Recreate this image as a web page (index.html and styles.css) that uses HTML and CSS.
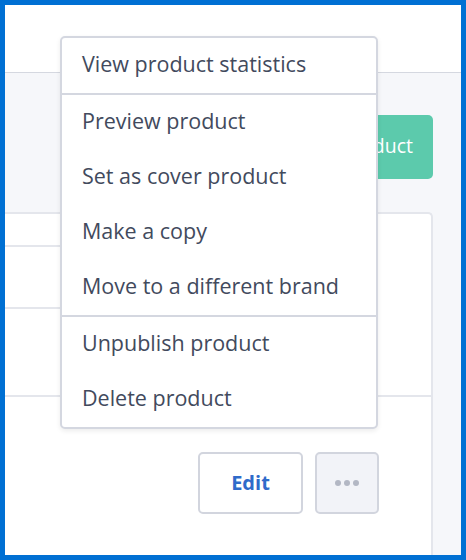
FILE: index.html
```html
<!DOCTYPE html>
<html lang="en">
<head>
    <meta charset="UTF-8">
    <meta name="viewport" content="width=device-width, initial-scale=1.0">
    <title>Products</title>
    <link rel="stylesheet" href="styles.css">
</head>
<body>
    <div class="frame">
        <div class="top-bar"></div>
        <div class="main">
            <div class="toolbar">
                <button type="button" class="add-btn">Add product</button>
            </div>
            <div class="card">
                <div class="row row-head"></div>
                <div class="row row-short"></div>
                <div class="row row-full"></div>
                <div class="actions">
                    <button type="button" class="edit-btn">Edit</button>
                    <button type="button" class="more-btn" aria-label="More">
                        <span class="dot"></span><span class="dot"></span><span class="dot"></span>
                    </button>
                </div>
            </div>
        </div>

        <!-- Product actions dropdown, opened from the ... button -->
        <ul class="menu">
            <li class="menu-group">
                <a href="#">View product statistics</a>
            </li>
            <li class="menu-group">
                <a href="#">Preview product</a>
                <a href="#">Set as cover product</a>
                <a href="#">Make a copy</a>
                <a href="#">Move to a different brand</a>
            </li>
            <li class="menu-group">
                <a href="#">Unpublish product</a>
                <a href="#">Delete product</a>
            </li>
        </ul>
    </div>
</body>
</html>
```

FILE: styles.css
```css
body {
    margin: 0;
    font-family: "Open Sans", "Noto Sans", Arial, sans-serif;
    color: #424a5d;
}
.frame {
    position: relative;
    box-sizing: border-box;
    width: 466px;
    height: 560px;
    border: 5px solid #0070d3;
    background-color: #f6f7fa;
    overflow: hidden;
    display: flex;
    flex-direction: column;
}
.top-bar {
    height: 67px;
    flex-shrink: 0;
    background-color: #fff;
    border-bottom: 1px solid #d5d8e0;
}
.main {
    flex: 1;
    display: flex;
    flex-direction: column;
    padding-right: 28px;
}
.toolbar {
    display: flex;
    justify-content: flex-end;
    margin-top: 42px;
}
.add-btn {
    height: 64px;
    padding: 0 20px 4px 40px;
    border: none;
    border-radius: 5px;
    background-color: #5ccaac;
    color: #fff;
    font-family: inherit;
    font-size: 19.5px;
}
.card {
    flex: 1;
    margin-top: 33px;
    background-color: #fff;
    border: 2px solid #e4e6ec;
    border-left: none;
    border-bottom: none;
    border-top-right-radius: 5px;
}
.row {
    border-bottom: 2px solid #e4e6ec;
}
.row-head {
    height: 31px;
    margin-right: 80px;
}
.row-short {
    height: 60px;
    margin-right: 80px;
}
.row-full {
    height: 86px;
}
.actions {
    display: flex;
    justify-content: flex-end;
    gap: 12px;
    margin-top: 55px;
    padding-right: 52px;
}
.edit-btn, .more-btn {
    box-sizing: border-box;
    height: 62px;
    border: 2px solid #d2d5de;
    border-radius: 5px;
    font-family: inherit;
}
.edit-btn {
    width: 105px;
    padding-bottom: 3px;
    background-color: #fff;
    color: #2f6bca;
    font-size: 20px;
    font-weight: bold;
}
.more-btn {
    width: 64px;
    background-color: #f2f3f8;
    display: flex;
    justify-content: center;
    align-items: center;
    gap: 3px;
}
.dot {
    width: 6px;
    height: 6px;
    border-radius: 50%;
    background-color: #b3b7c4;
}
.menu {
    position: absolute;
    top: 31px;
    left: 55px;
    width: 318px;
    box-sizing: border-box;
    margin: 0;
    padding: 0;
    list-style: none;
    background-color: #fff;
    border: 2px solid #d4d7e0;
    border-radius: 5px;
    box-shadow: 0 2px 5px rgba(0, 0, 0, 0.08);
}
.menu-group {
    display: flex;
    flex-direction: column;
}
.menu-group + .menu-group {
    border-top: 2px solid #d4d7e0;
}
.menu a {
    display: flex;
    align-items: center;
    box-sizing: border-box;
    height: 55px;
    padding: 0 20px 5px;
    color: #424a5d;
    text-decoration: none;
    font-size: 21.5px;
}
```
